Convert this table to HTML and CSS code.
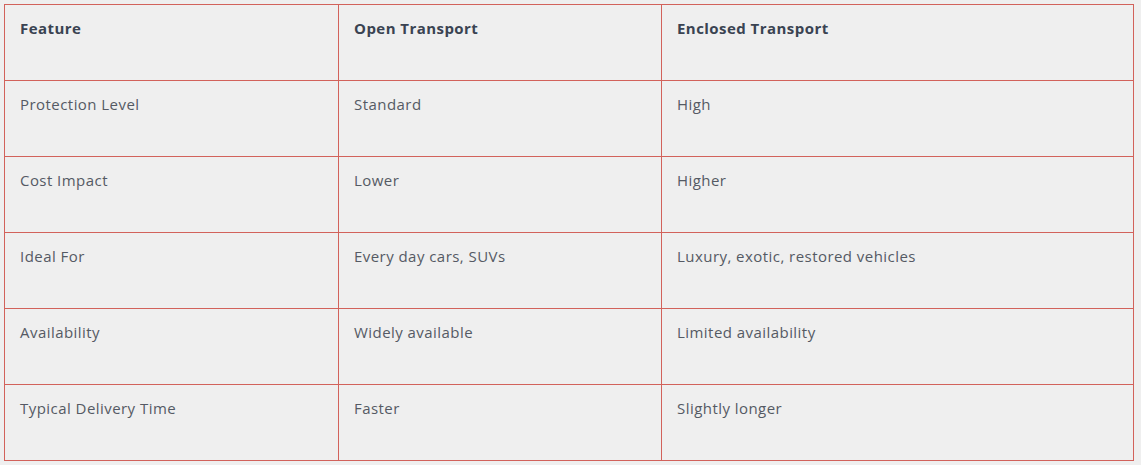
FILE: index.html
```html
<!DOCTYPE html>
<html>
<head>
<meta charset="utf-8">
<link rel="stylesheet" href="styles.css">
</head>
<body>
<table class="compare">
  <thead>
    <tr><th>Feature</th><th>Open Transport</th><th>Enclosed Transport</th></tr>
  </thead>
  <tbody>
    <tr><td>Protection Level</td><td>Standard</td><td>High</td></tr>
    <tr><td>Cost Impact</td><td>Lower</td><td>Higher</td></tr>
    <tr><td>Ideal For</td><td>Every day cars, SUVs</td><td>Luxury, exotic, restored vehicles</td></tr>
    <tr><td>Availability</td><td>Widely available</td><td>Limited availability</td></tr>
    <tr><td>Typical Delivery Time</td><td>Faster</td><td>Slightly longer</td></tr>
  </tbody>
</table>
</body>
</html>
```
FILE: styles.css
```css
html, body {
  margin: 0;
  background: #efefef;
}
body {
  padding: 4px;
  font-family: "Open Sans", "Liberation Sans", sans-serif;
  font-size: 15px;
  letter-spacing: 0.45px;
  color: #555a64;
}
.compare {
  border-collapse: collapse;
  width: 1130px;
  table-layout: fixed;
}
.compare th,
.compare td {
  border: 1px solid #d2625b;
  height: 76px;
  box-sizing: border-box;
  padding: 13px 15px;
  vertical-align: top;
  text-align: left;
  line-height: 20px;
}
.compare th {
  font-weight: 700;
  color: #3a4352;
}
.compare th:nth-child(1) { width: 334px; }
.compare th:nth-child(2) { width: 323px; }
```
